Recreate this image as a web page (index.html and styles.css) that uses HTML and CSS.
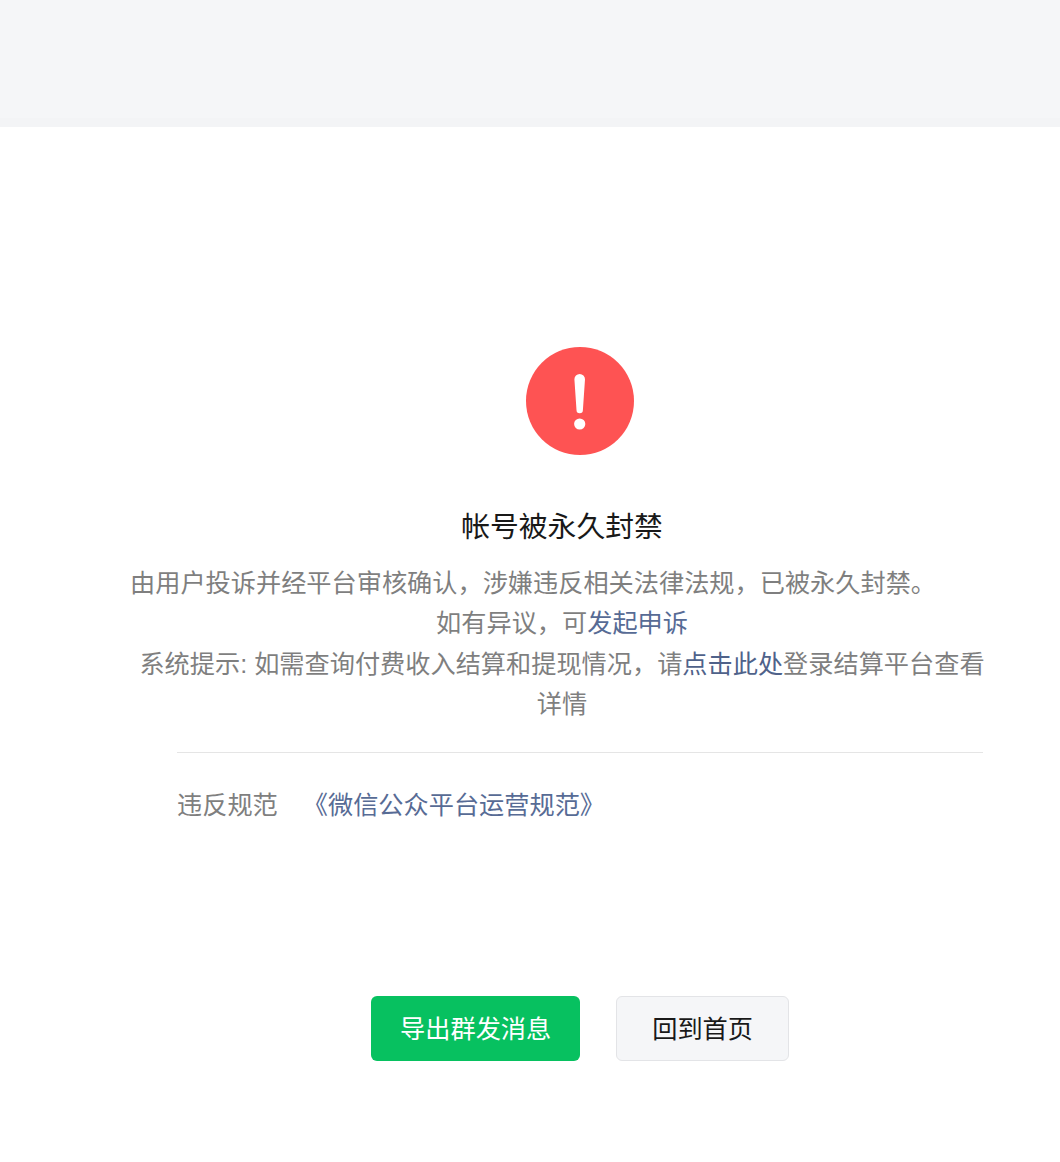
FILE: index.html
```html
<!DOCTYPE html>
<html lang="zh-CN">
<head>
<meta charset="utf-8">
<title>帐号被永久封禁</title>
<link rel="stylesheet" href="styles.css">
</head>
<body>
<header class="topbar"><div class="topbar-edge"></div></header>
<main class="page">
  <svg class="alert-icon" viewBox="0 0 108 108" aria-hidden="true">
    <circle cx="54" cy="54" r="54" fill="#fe5353"/>
    <path d="M48.4 32.3a5.3 5.3 0 0 1 10.6 0L56.9 63a3.2 3.2 0 0 1-6.4 0z" fill="#fff"/>
    <circle cx="53.7" cy="77" r="5.6" fill="#fff"/>
  </svg>
  <div class="message">
    <h1 class="title">帐号被永久封禁</h1>
    <p class="desc"><span class="desc-first">由用户投诉并经平台审核确认，涉嫌违反相关法律法规，已被永久封禁。</span><br>如有异议，可<a class="link" href="#">发起申诉</a><br>系统提示: 如需查询付费收入结算和提现情况，请<a class="link-dark" href="#">点击此处</a>登录结算平台查看详情</p>
  </div>
  <section class="rule">
    <span class="rule-label">违反规范</span>
    <a class="rule-link" href="#">《微信公众平台运营规范》</a>
  </section>
  <div class="actions">
    <a class="btn btn-primary" href="#">导出群发消息</a>
    <a class="btn btn-default" href="#">回到首页</a>
  </div>
</main>
</body>
</html>
```
FILE: styles.css
```css
* { box-sizing: border-box; }
html, body { margin: 0; padding: 0; background: #fff; }
body {
  font-family: "Liberation Sans", "Noto Sans CJK SC", sans-serif;
  font-size: 25.2px;
  color: #7f7f7f;
}
.topbar {
  height: 127px;
  background: #f5f6f8;
  display: flex;
  flex-direction: column;
  justify-content: flex-end;
}
.topbar-edge { height: 9px; background: #f3f4f6; }
.page {
  display: flex;
  flex-direction: column;
  align-items: center;
  padding: 220px 0 101px 100px;
}
.alert-icon { width: 108px; height: 108px; display: block; }
.message {
  width: 866px;
  margin: 49px 36px 0 0;
  text-align: center;
}
.title {
  margin: 0;
  font-size: 28.8px;
  line-height: 46px;
  font-weight: 400;
  color: #191919;
}
.desc {
  margin: 13px 0 0;
  line-height: 40.4px;
}
.desc-first { padding-right: 58px; }
.link, .rule-link { text-decoration: none; color: #576b95; }
.link-dark { text-decoration: none; color: #4f628a; }
.rule {
  width: 806px;
  margin-top: 27px;
  padding-top: 32px;
  border-top: 1px solid #e5e5e5;
  line-height: 40px;
  display: flex;
  gap: 25px;
}
.actions {
  display: flex;
  gap: 36px;
  margin-top: 171px;
}
.btn {
  display: block;
  height: 65px;
  line-height: 67px;
  padding: 0 29px;
  border-radius: 6px;
  text-decoration: none;
}
.btn-primary { background: #07c160; color: #fff; }
.btn-default {
  padding: 0 35px;
  line-height: 65px;
  background: #f5f6f8;
  color: #191919;
  border: 1px solid #e3e4e7;
}
```
